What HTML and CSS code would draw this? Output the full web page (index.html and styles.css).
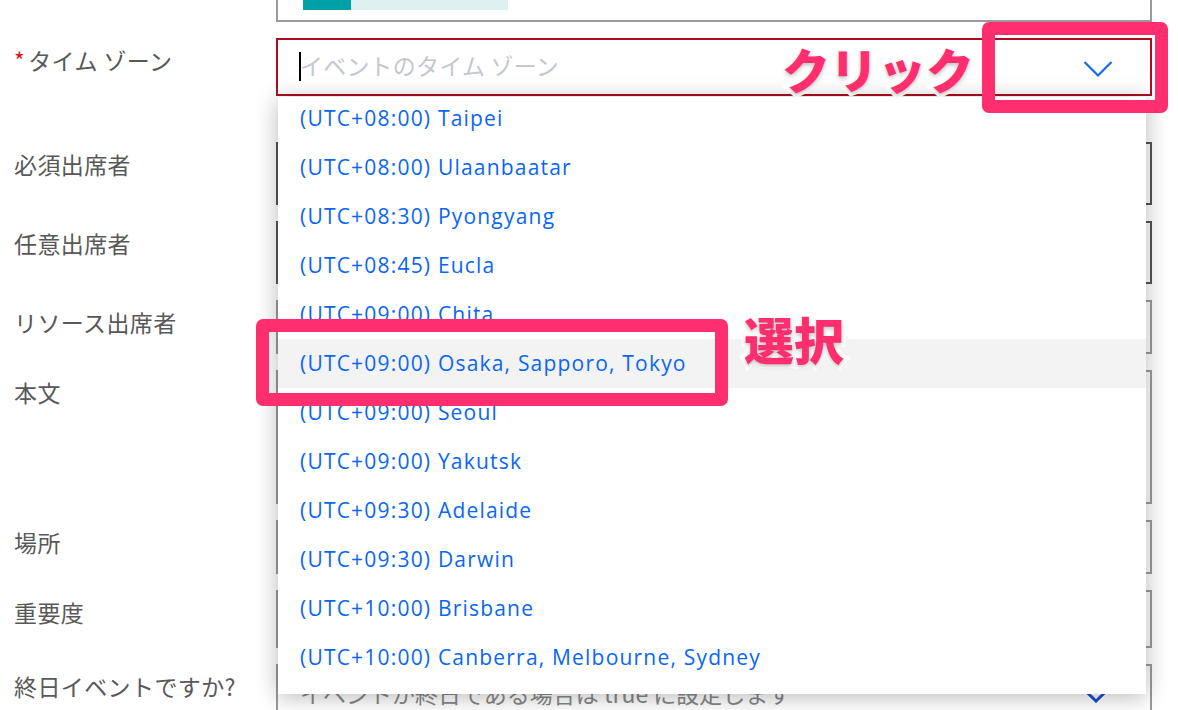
FILE: index.html
```html
<!DOCTYPE html>
<html lang="ja">
<head>
<meta charset="utf-8">
<title>タイム ゾーン</title>
<link rel="stylesheet" href="styles.css">
</head>
<body>
<div class="page">
  <div class="form">
    <div class="row">
      <div class="label"></div>
      <div class="field box-top"><div class="meter"><span class="meter-fill"></span></div></div>
    </div>
    <div class="row row-tz">
      <div class="label"><span class="req">*</span>タイム ゾーン</div>
      <div class="field tz">
        <span class="caret"></span><span class="placeholder">イベントのタイム ゾーン</span>
        <svg class="chev" width="30" height="18" viewBox="0 0 30 18"><path d="M1.5 2 L15 15.5 L28.5 2" fill="none" stroke="#1469f0" stroke-width="2.2"/></svg>
        <div class="dropdown">
          <ul class="options">
            <li>(UTC+08:00) Taipei</li>
            <li>(UTC+08:00) Ulaanbaatar</li>
            <li>(UTC+08:30) Pyongyang</li>
            <li>(UTC+08:45) Eucla</li>
            <li>(UTC+09:00) Chita</li>
            <li class="active">(UTC+09:00) Osaka, Sapporo, Tokyo</li>
            <li>(UTC+09:00) Seoul</li>
            <li>(UTC+09:00) Yakutsk</li>
            <li>(UTC+09:30) Adelaide</li>
            <li>(UTC+09:30) Darwin</li>
            <li>(UTC+10:00) Brisbane</li>
            <li>(UTC+10:00) Canberra, Melbourne, Sydney</li>
          </ul>
        </div>
      </div>
    </div>
    <div class="row">
      <div class="label">必須出席者</div>
      <div class="field dark h63"></div>
    </div>
    <div class="row">
      <div class="label">任意出席者</div>
      <div class="field dark h63"></div>
    </div>
    <div class="row">
      <div class="label">リソース出席者</div>
      <div class="field h54"></div>
    </div>
    <div class="row">
      <div class="label">本文</div>
      <div class="field h134"></div>
    </div>
    <div class="row">
      <div class="label">場所</div>
      <div class="field h54"></div>
    </div>
    <div class="row">
      <div class="label">重要度</div>
      <div class="field h58"></div>
    </div>
    <div class="row">
      <div class="label">終日イベントですか?</div>
      <div class="field h58 allday">
        <span class="ph2">イベントが終日である場合は true に設定します</span>
        <svg class="chev2" width="28" height="16" viewBox="0 0 28 16"><path d="M1.5 2 L14 14 L26.5 2" fill="none" stroke="#1452d0" stroke-width="3"/></svg>
      </div>
    </div>
  </div>

  <div class="mark mark-click"></div>
  <div class="note note-click">クリック</div>
  <div class="mark mark-select"></div>
  <div class="note note-select">選択</div>
</div>
</body>
</html>
```

FILE: styles.css
```css
html, body {
  margin: 0;
  padding: 0;
  background: #ffffff;
}

.page {
  position: relative;
  width: 1178px;
  height: 710px;
  overflow: hidden;
  font-family: "Noto Sans CJK JP", "Noto Sans", sans-serif;
}

.form {
  display: flex;
  flex-direction: column;
  gap: 16px;
  margin-top: -38px;
}

.row {
  display: grid;
  grid-template-columns: 276px 876px;
  align-items: start;
}

.label {
  padding-left: 14px;
  padding-top: 7px;
  line-height: 30px;
  font-size: 23px;
  letter-spacing: 0.4px;
  color: #585858;
  white-space: nowrap;
}

.req {
  color: #e8101c;
  margin-right: 3px;
}

.field {
  box-sizing: border-box;
  border: 2px solid #9b9b9b;
  background: #fff;
}

.box-top {
  height: 60px;
  padding: 36px 0 0 25px;
}

.meter {
  width: 205px;
  height: 10px;
  background: #dff0f0;
  display: flex;
}

.meter-fill {
  width: 48px;
  background: #00a0a8;
}

.row-tz {
  margin-bottom: 30px;
  position: relative;
  z-index: 2;
}

.tz {
  height: 58px;
  border-color: #ad0f1e;
  position: relative;
  display: flex;
  align-items: center;
  padding-left: 21px;
}

.caret {
  width: 2px;
  height: 29px;
  background: #000;
  margin-top: -2px;
}

.placeholder {
  font-size: 23px;
  letter-spacing: 0.2px;
  color: #c3c7cf;
  margin-left: -1px;
  margin-top: -4px;
}

.chev {
  margin-left: auto;
  margin-right: 37px;
  margin-top: 4px;
}

.dropdown {
  position: absolute;
  top: calc(100% + 3px);
  left: 0;
  width: 868px;
  height: 597px;
  overflow: hidden;
  background: #fff;
  box-shadow: 0 3px 22px rgba(0, 0, 0, 0.28);
}

.options {
  list-style: none;
  margin: -3px 0 0;
  padding: 0;
}

.options li {
  height: 49px;
  line-height: 49px;
  padding-left: 22px;
  font-family: "Open Sans", "Noto Sans", sans-serif;
  font-size: 21px;
  letter-spacing: 1.2px;
  color: #0a66f5;
  white-space: nowrap;
}

.options li.active {
  background: #f3f3f3;
}

.dark {
  border-color: #555;
}

.h63 { height: 63px; }
.h54 { height: 54px; }
.h58 { height: 58px; }
.h134 { height: 134px; }

.allday {
  display: flex;
  align-items: center;
  padding-left: 22px;
}

.ph2 {
  font-size: 23px;
  color: #888;
  margin-top: 0;
}

.chev2 {
  margin-left: auto;
  margin-right: 40px;
  margin-top: 4px;
}

.mark {
  position: absolute;
  box-sizing: border-box;
  border: 13px solid #ff2f6f;
  border-radius: 7px;
  z-index: 5;
}

.mark-click {
  left: 982px;
  top: 22px;
  width: 186px;
  height: 91px;
}

.mark-select {
  left: 256px;
  top: 319px;
  width: 472px;
  height: 87px;
}

.note {
  position: absolute;
  z-index: 6;
  font-family: "Noto Sans CJK JP", sans-serif;
  font-weight: 900;
  color: #ff2f6f;
  -webkit-text-stroke: 8px #fff;
  paint-order: stroke fill;
  text-shadow: 0 2px 4px rgba(0, 0, 0, 0.25);
  line-height: 1;
  white-space: nowrap;
}

.note-click {
  left: 782px;
  top: 44px;
  font-size: 48px;
}

.note-select {
  left: 744px;
  top: 313px;
  font-size: 50px;
}
```
